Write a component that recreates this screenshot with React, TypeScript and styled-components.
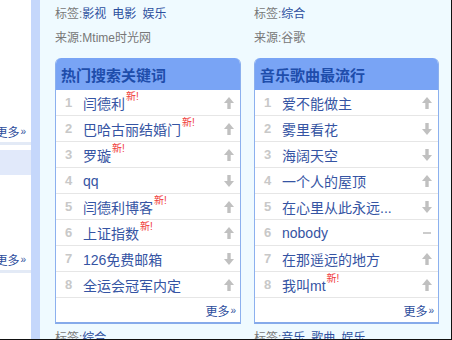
import React from 'react';
import styled, { createGlobalStyle } from 'styled-components';

const GlobalStyle = createGlobalStyle`
  html, body {
    margin: 0;
    padding: 0;
    background: #fff;
  }
  body {
    font-family: "Liberation Sans", "Noto Sans CJK SC", sans-serif;
    font-size: 12px;
  }
`;

type Trend = 'up' | 'down' | 'flat';

interface IEntry {
    name: string;
    trend: Trend;
    isNew?: boolean;
}

interface IBoard {
    tags: string[];
    source: string;
    title: string;
    entries: IEntry[];
    nextTags: string[];
}

const boards: IBoard[] = [
    {
        tags: ['影视', '电影', '娱乐'],
        source: 'Mtime时光网',
        title: '热门搜索关键词',
        entries: [
            { name: '闫德利', trend: 'up', isNew: true },
            { name: '巴哈古丽结婚门', trend: 'up', isNew: true },
            { name: '罗璇', trend: 'up', isNew: true },
            { name: 'qq', trend: 'down' },
            { name: '闫德利博客', trend: 'up', isNew: true },
            { name: '上证指数', trend: 'up', isNew: true },
            { name: '126免费邮箱', trend: 'down' },
            { name: '全运会冠军内定', trend: 'up' },
        ],
        nextTags: ['综合'],
    },
    {
        tags: ['综合'],
        source: '谷歌',
        title: '音乐歌曲最流行',
        entries: [
            { name: '爱不能做主', trend: 'up' },
            { name: '雾里看花', trend: 'down' },
            { name: '海阔天空', trend: 'down' },
            { name: '一个人的屋顶', trend: 'up' },
            { name: '在心里从此永远...', trend: 'down' },
            { name: 'nobody', trend: 'flat' },
            { name: '在那遥远的地方', trend: 'up' },
            { name: '我叫mt', trend: 'up', isNew: true },
        ],
        nextTags: ['音乐', '歌曲', '娱乐'],
    },
];

const Frame = styled.div`
    width: 452px;
    height: 340px;
    box-sizing: border-box;
    border-right: 1px solid #111;
    border-bottom: 1px solid #111;
    display: flex;
    overflow: hidden;
`;

const CutColumn = styled.div`
    width: 31px;
    flex-shrink: 0;
    display: flex;
    flex-direction: column;
    overflow: hidden;
    background: #fff;
`;

const CutMore = styled.div<{ $top: number }>`
    margin-top: ${({ $top }) => $top}px;
    height: 22px;
    border-bottom: 3px solid #e3eaf6;
    display: flex;
    justify-content: flex-end;
    align-items: center;
    padding-right: 5px;
    white-space: nowrap;
    color: #2c4d9c;
`;

const CutBand = styled.div`
    margin-top: 5px;
    height: 25px;
    background: #e1e9fa;
`;

const Divider = styled.div`
    width: 9px;
    flex-shrink: 0;
    background: #c5d7fb;
`;

const Main = styled.div`
    flex: 1;
    background: #effaff;
    padding: 2px 0 0 15px;
    display: grid;
    grid-template-columns: 186px 185px;
    column-gap: 13px;
    align-content: start;
`;

const Column = styled.div`
    display: flex;
    flex-direction: column;
`;

const InfoLine = styled.div<{ $gap?: number }>`
    margin-top: ${({ $gap }) => $gap ?? 0}px;
    height: 24px;
    line-height: 24px;
    color: #777;
    white-space: nowrap;
`;

const TagLink = styled.span`
    color: #2c4f9e;
    margin-right: 6px;
`;

const Card = styled.div`
    margin-top: 8px;
    border: 1px solid #8cb0ee;
    border-top: none;
    border-bottom: 2px solid #86aaea;
    border-radius: 6px 6px 0 0;
    overflow: hidden;
    background: #fff;
`;

const CardHeader = styled.div`
    height: 32px;
    background: #79a4f5;
    display: flex;
    align-items: center;
    padding-left: 5px;
    font-size: 15px;
    font-weight: bold;
    color: #1e4dab;
`;

const Row = styled.div`
    height: 25px;
    border-bottom: 1px solid #e6e6e6;
    display: flex;
    align-items: center;
`;

const Rank = styled.span`
    width: 18px;
    padding-left: 9px;
    font-size: 13px;
    font-weight: bold;
    color: #c8c8c8;
`;

const Name = styled.span`
    font-size: 14px;
    color: #3554a3;
    white-space: nowrap;
`;

const NewMark = styled.span`
    position: relative;
    top: -7px;
    margin-left: 1px;
    font-size: 10px;
    color: #f03a3a;
`;

const TrendBox = styled.span`
    margin-left: auto;
    margin-right: 6px;
    width: 10px;
    height: 12px;
    display: flex;
    align-items: center;
    justify-content: center;
`;

const CardFooter = styled.div`
    height: 24px;
    display: flex;
    justify-content: flex-end;
    align-items: center;
    padding-right: 4px;
    color: #2c4d9c;
`;

const Raquo = styled.span`
    font-size: 10px;
    margin-left: 1px;
`;

const TrendIcon = ({ trend }: { trend: Trend }) => {
    if (trend === 'flat') {
        return (
            <svg width="10" height="12" viewBox="0 0 10 12">
                <rect x="1" y="5" width="8" height="2" fill="#cccccc" />
            </svg>
        );
    }
    const flip = trend === 'down' ? 'rotate(180 5 6)' : undefined;
    return (
        <svg width="10" height="12" viewBox="0 0 10 12">
            <g transform={flip} fill="#c0c0c0">
                <polygon points="5,0 10,6 0,6" />
                <rect x="3.3" y="5" width="3.4" height="7" />
            </g>
        </svg>
    );
};

const BoardColumn = ({ board }: { board: IBoard }) => (
    <Column>
        <InfoLine>
            标签:{board.tags.map((t) => <TagLink key={t}>{t}</TagLink>)}
        </InfoLine>
        <InfoLine>来源:{board.source}</InfoLine>
        <Card>
            <CardHeader>{board.title}</CardHeader>
            {board.entries.map((e, i) => (
                <Row key={e.name}>
                    <Rank>{i + 1}</Rank>
                    <Name>{e.name}</Name>
                    {e.isNew && <NewMark>新!</NewMark>}
                    <TrendBox>
                        <TrendIcon trend={e.trend} />
                    </TrendBox>
                </Row>
            ))}
            <CardFooter>
                更多<Raquo>»</Raquo>
            </CardFooter>
        </Card>
        <InfoLine $gap={2}>
            标签:{board.nextTags.map((t) => <TagLink key={t}>{t}</TagLink>)}
        </InfoLine>
    </Column>
);

export default function App() {
    return (
        <>
            <GlobalStyle />
            <Frame>
                <CutColumn>
                    <CutMore $top={120}>更多<Raquo>»</Raquo></CutMore>
                    <CutBand />
                    <CutMore $top={73}>更多<Raquo>»</Raquo></CutMore>
                </CutColumn>
                <Divider />
                <Main>
                    {boards.map((b) => <BoardColumn key={b.title} board={b} />)}
                </Main>
            </Frame>
        </>
    );
}
